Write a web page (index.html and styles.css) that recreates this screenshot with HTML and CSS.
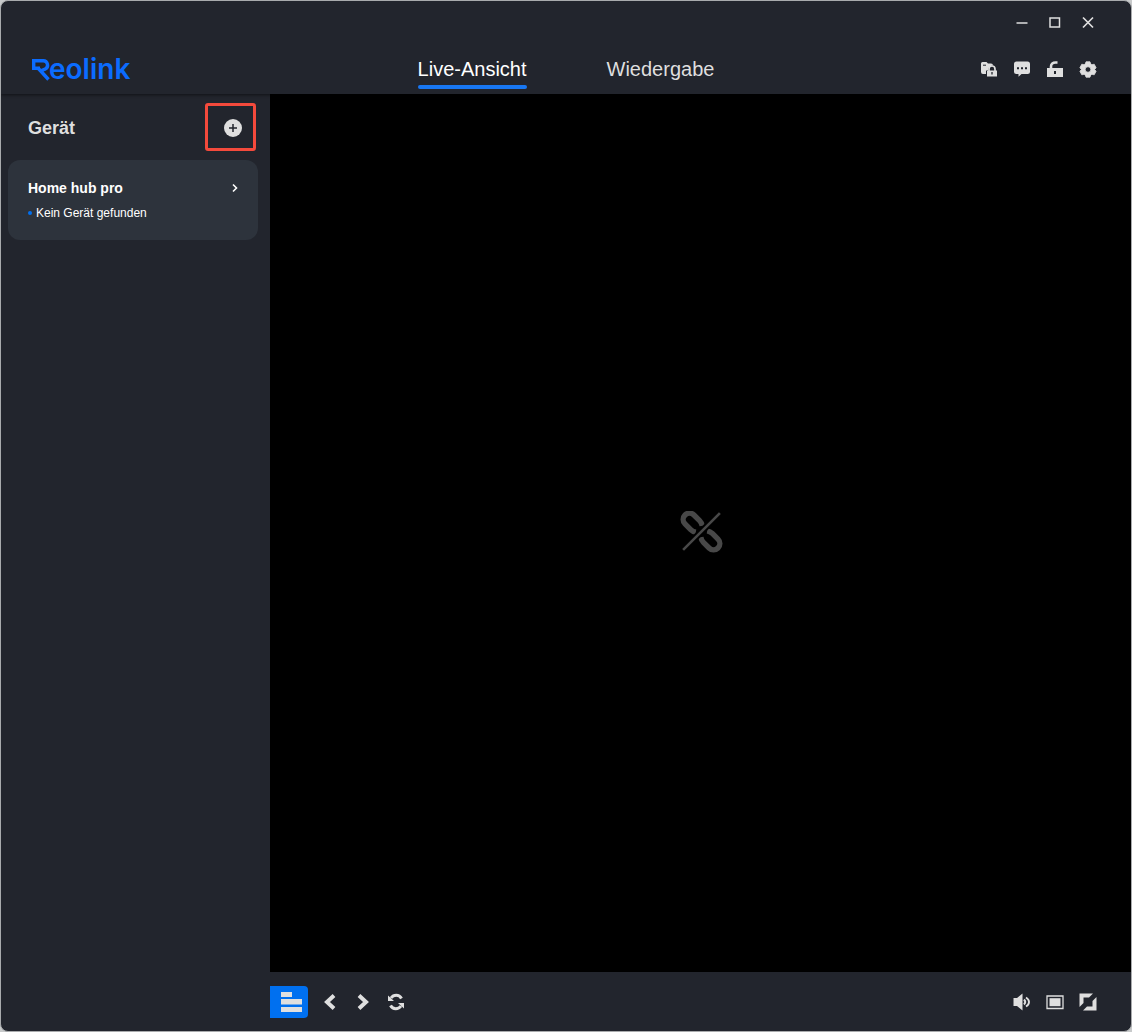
FILE: index.html
```html
<!DOCTYPE html>
<html lang="de">
<head>
<meta charset="utf-8">
<meta name="viewport" content="width=device-width, initial-scale=1">
<title>Reolink</title>
<link rel="stylesheet" href="styles.css">
</head>
<body>
<div class="window">
  <header class="header">
    <div class="titlebar">
      <button class="icon-button" aria-label="Minimieren"><svg viewBox="0 0 20 20"><path d="M4.500 11h11" stroke="currentColor" stroke-width="1.400" fill="none"/></svg></button>
      <button class="icon-button" aria-label="Maximieren"><svg viewBox="0 0 20 20"><path d="M5 6h9.500v9H5z" stroke="currentColor" stroke-width="1.500" fill="none"/></svg></button>
      <button class="icon-button" aria-label="Schließen"><svg viewBox="0 0 20 20"><path d="M5 5.500l10 10M15 5.500L5 15.500" stroke="currentColor" stroke-width="1.700" fill="none"/></svg></button>
    </div>
    <div class="navbar">
      <a class="logo" href="#"><span class="logo-initial">R<svg viewBox="0 0 20 24"><path d="M9 10.200H2.700V2.700H12a4.400 4.400 0 0 1 2 8.400l-3.500 1.400M6.500 9.500L17.500 21.500" stroke="currentColor" stroke-width="3.400" fill="none"/></svg></span>eolink</a>
      <nav class="tabs">
        <a class="tab tab-active" href="#live" aria-current="page">Live-Ansicht</a>
        <a class="tab" href="#playback">Wiedergabe</a>
      </nav>
      <div class="actions">
        <button class="icon-button" aria-label="Gesperrte Dateien"><svg viewBox="0 0 20 20"><path d="M2 4.500Q2 3 3.500 3H7.500l1.500 1.500h3q2 0 2 2-4 0-5 4.500l-2 .8v3.200H4q-2 0-2-2z"/><path d="M4 6.200h3" stroke="#22252c" fill="none"/><path d="M8 11.500h10v6H8z"/><path d="M10 12V10a3 3 0 0 1 6 0V12" stroke="currentColor" stroke-width="1.700" fill="none"/><path d="M13 13v2.500" stroke="#22252c" stroke-width="1.300"/></svg></button>
        <button class="icon-button" aria-label="Nachrichten"><svg viewBox="0 0 20 20"><path d="M4.500 2.500h11A2.500 2.500 0 0 1 18 5v7.500a2.500 2.500 0 0 1-2.500 2.500H9.500L6.500 17.800V15h-2A2.500 2.500 0 0 1 2 12.500V5a2.500 2.500 0 0 1 2.500-2.500z"/><path d="M5 8.200h2v2H5zM9 8.200h2v2H9zM13 8.200h2v2h-2z" fill="#22252c"/></svg></button>
        <button class="icon-button" aria-label="Entsperrt"><svg viewBox="0 0 20 20"><path d="M2 9h16v9H2z"/><path d="M6 9.500V7.500c0-2.700 2-4 4.500-4H12.500" stroke="currentColor" stroke-width="2.600" fill="none"/><path d="M10 12v3" stroke="#22252c" stroke-width="2"/></svg></button>
        <button class="icon-button" aria-label="Einstellungen"><svg viewBox="0 0 20 20"><path fill-rule="evenodd" d="M8 2.800h4l.7 2.200 1.300.7 2.200-.5 1.900 3.500-1.500 1.800 1.500 1.800-1.900 3.500-2.200-.5-1.300.7-.7 2.200H8l-.7-2.200-1.300-.7-2.200.5-1.900-3.500 1.500-1.800L1.900 8.700l1.900-3.500 2.200.5 1.300-.7zM10 7.700a2.800 2.800 0 1 0 0 5.600 2.800 2.800 0 0 0 0-5.600z" stroke="currentColor" stroke-linejoin="round" stroke-width=".8"/></svg></button>
      </div>
    </div>
  </header>
  <div class="body">
    <aside class="sidebar">
      <div class="sidebar-head">
        <h2 class="sidebar-title">Gerät</h2>
        <button class="add-button" aria-label="Gerät hinzufügen"><svg viewBox="0 0 18 18"><circle cx="9" cy="9" r="9"/><path d="M9 5v8M5 9h8" stroke="#22252c" stroke-width="1.500"/></svg></button>
      </div>
      <a class="device" href="#device">
        <span class="device-name">Home hub pro</span>
        <svg class="device-arrow" viewBox="0 0 10 10"><path d="M3 1.500L6.500 5 3 8.500" stroke="currentColor" stroke-width="1.600" fill="none"/></svg>
        <span class="device-status">Kein Gerät gefunden</span>
      </a>
    </aside>
    <main class="main">
      <div class="viewer">
        <svg class="unlinked" viewBox="0 0 44 44"><g transform="translate(22.500 20.500) rotate(45)"><path id="link-half" d="M-3.500 -4.500Q-6 -6.300 -9 -6.300H-17a6.300 6.300 0 0 0 0 12.600H-9Q-6 6.300 -3.500 4.500" stroke="currentColor" stroke-width="5.400" fill="none"/><use href="#link-half" transform="rotate(180)"/><path d="M0 -27V27" stroke="#000" stroke-width="6.500"/><path d="M0 -26V26" stroke="currentColor" stroke-width="2.600"/></g></svg>
      </div>
      <footer class="toolbar">
        <button class="layout-button" aria-label="Liste"><svg viewBox="0 0 22 20"><path d="M0 0h11v5H0zM0 7h21v5.500H0zM0 15h21v5H0z"/></svg></button>
        <div class="toolbar-group">
          <button class="icon-button" aria-label="Zurück"><svg viewBox="0 0 20 20"><path d="M14 3.500L7 10l7 6.500" stroke="currentColor" stroke-width="4" fill="none"/></svg></button>
          <button class="icon-button" aria-label="Weiter"><svg viewBox="0 0 20 20"><path d="M6 3.500L13 10l-7 6.500" stroke="currentColor" stroke-width="4" fill="none"/></svg></button>
          <button class="icon-button" aria-label="Aktualisieren"><svg viewBox="0 0 20 20"><path d="M5 6C7.500 2.500 13 2 15.500 6.500M15 14c-2.500 3.500-8 4-10.500-.5" stroke="currentColor" stroke-width="3" fill="none"/><path d="M2 3.500v5.500h6zM18 16.500v-5.500h-6z"/></svg></button>
        </div>
        <div class="toolbar-group toolbar-end">
          <button class="icon-button" aria-label="Lautstärke"><svg viewBox="0 0 20 20"><path d="M1.500 6H5L10.500 1.500v17L5 14H1.500z"/><path d="M12 7.500c1.500 1.500 1.500 3.500 0 5M14 5.500c4 2.500 4 6.500 0 9" stroke="currentColor" stroke-width="1.900" fill="none"/></svg></button>
          <button class="icon-button" aria-label="Seitenverhältnis"><svg viewBox="0 0 20 20"><path d="M2 4h16v12.500H2z" stroke="currentColor" stroke-width="1.300" fill="none"/><path d="M4.500 6.200h11v8h-11z"/></svg></button>
          <button class="icon-button" aria-label="Vollbild"><svg viewBox="0 0 20 20"><path d="M1.500 1.500H15L11 5.500H5.500V11L1.500 15zM18.500 18.500H5L9 14.500h5.500V9l4-4z"/></svg></button>
        </div>
      </footer>
    </main>
  </div>
</div>
</body>
</html>
```
FILE: styles.css
```css
* {
  box-sizing: border-box;
}

body {
  margin: 0;
  background: #c8cacb;
  color: #dfdfdf;
  font-family: "Liberation Sans", Arial, sans-serif;
}

a {
  color: inherit;
  text-decoration: none;
}

button {
  padding: 0;
  border: 0;
  background: none;
  color: inherit;
}

svg {
  display: block;
  fill: currentColor;
}

.window {
  display: flex;
  flex-direction: column;
  min-height: 100vh;
  overflow: hidden;
  border: 1px solid #a9abad;
  border-radius: 8px;
  background: #22252d;
}

.header {
  z-index: 1;
  box-shadow: 0 1px 3px #0008;
}

.titlebar {
  display: flex;
  justify-content: flex-end;
  gap: 13px;
  padding: 11px 33px 0 0;
}

.icon-button {
  width: 20px;
  height: 20px;
}

.icon-button svg {
  width: 20px;
  height: 20px;
}

.navbar {
  display: grid;
  grid-template-columns: 1fr auto 1fr;
  align-items: start;
  padding: 13px 31px 0;
  height: 62px;
}

.logo {
  display: flex;
  justify-self: start;
  padding-top: 8px;
  color: #0b6cff;
  font: 600 28px/32px Inter, sans-serif;
}

.logo-initial {
  position: relative;
  width: 17px;
  color: transparent;
}

.logo-initial svg {
  position: absolute;
  top: 5px;
  left: -1px;
  width: 20px;
  height: 24px;
  color: #0b6cff;
}

.tabs {
  display: flex;
  gap: 80px;
  padding-top: 10px;
}

.tab {
  position: relative;
  padding-bottom: 6px;
  font-size: 20px;
  line-height: 28px;
}

.tab-active {
  color: #fff;
}

.tab-active::after {
  position: absolute;
  right: 0;
  bottom: 0;
  left: 0;
  height: 4px;
  border-radius: 2px;
  background: #1877f2;
  content: "";
}

.actions {
  display: flex;
  justify-content: flex-end;
  gap: 13px;
  padding: 14px 2px 0 0;
}

.body {
  display: flex;
  flex: 1;
}

.sidebar {
  flex: 0 0 269px;
  padding: 23px 12px 0 7px;
}

.sidebar-head {
  display: flex;
  align-items: center;
  justify-content: space-between;
  padding: 0 16px 0 20px;
}

.sidebar-title {
  margin: 0;
  font-size: 18px;
  line-height: 22px;
}

.add-button {
  position: relative;
  width: 18px;
  height: 18px;
}

/* Highlight frame around the add button */
.add-button::after {
  position: absolute;
  inset: -16px -14px -14px -19px;
  border: 3px solid #f44a3c;
  border-radius: 3px;
  content: "";
}

.device {
  display: grid;
  grid-template-columns: 1fr auto;
  row-gap: 6px;
  align-items: center;
  margin-top: 21px;
  padding: 18px 18px 18px 20px;
  border-radius: 12px;
  background: #2d333c;
  color: #fff;
}

.device-name {
  font-size: 14px;
  font-weight: bold;
  line-height: 20px;
}

.device-arrow {
  width: 10px;
  height: 10px;
}

.device-status {
  display: flex;
  align-items: center;
  gap: 4px;
  font-size: 12px;
  line-height: 18px;
}

.device-status::before {
  width: 4px;
  height: 4px;
  border-radius: 2px;
  background: #0070f0;
  content: "";
}

.main {
  display: flex;
  flex: 1;
  flex-direction: column;
  min-width: 0;
}

.viewer {
  display: flex;
  flex: 1;
  align-items: center;
  justify-content: center;
  background: #000;
}

.unlinked {
  width: 44px;
  height: 44px;
  color: #484848;
}

.toolbar {
  display: flex;
  align-items: center;
  padding: 14px 33px 13px 0;
}

.layout-button {
  display: flex;
  align-items: center;
  width: 38px;
  height: 32px;
  padding-left: 11px;
  border-radius: 0 4px 4px 0;
  background: #0070f0;
}

.layout-button svg {
  width: 22px;
  height: 20px;
}

.toolbar-group {
  display: flex;
  gap: 13px;
  padding-left: 12px;
}

.toolbar-end {
  margin-left: auto;
}
```
